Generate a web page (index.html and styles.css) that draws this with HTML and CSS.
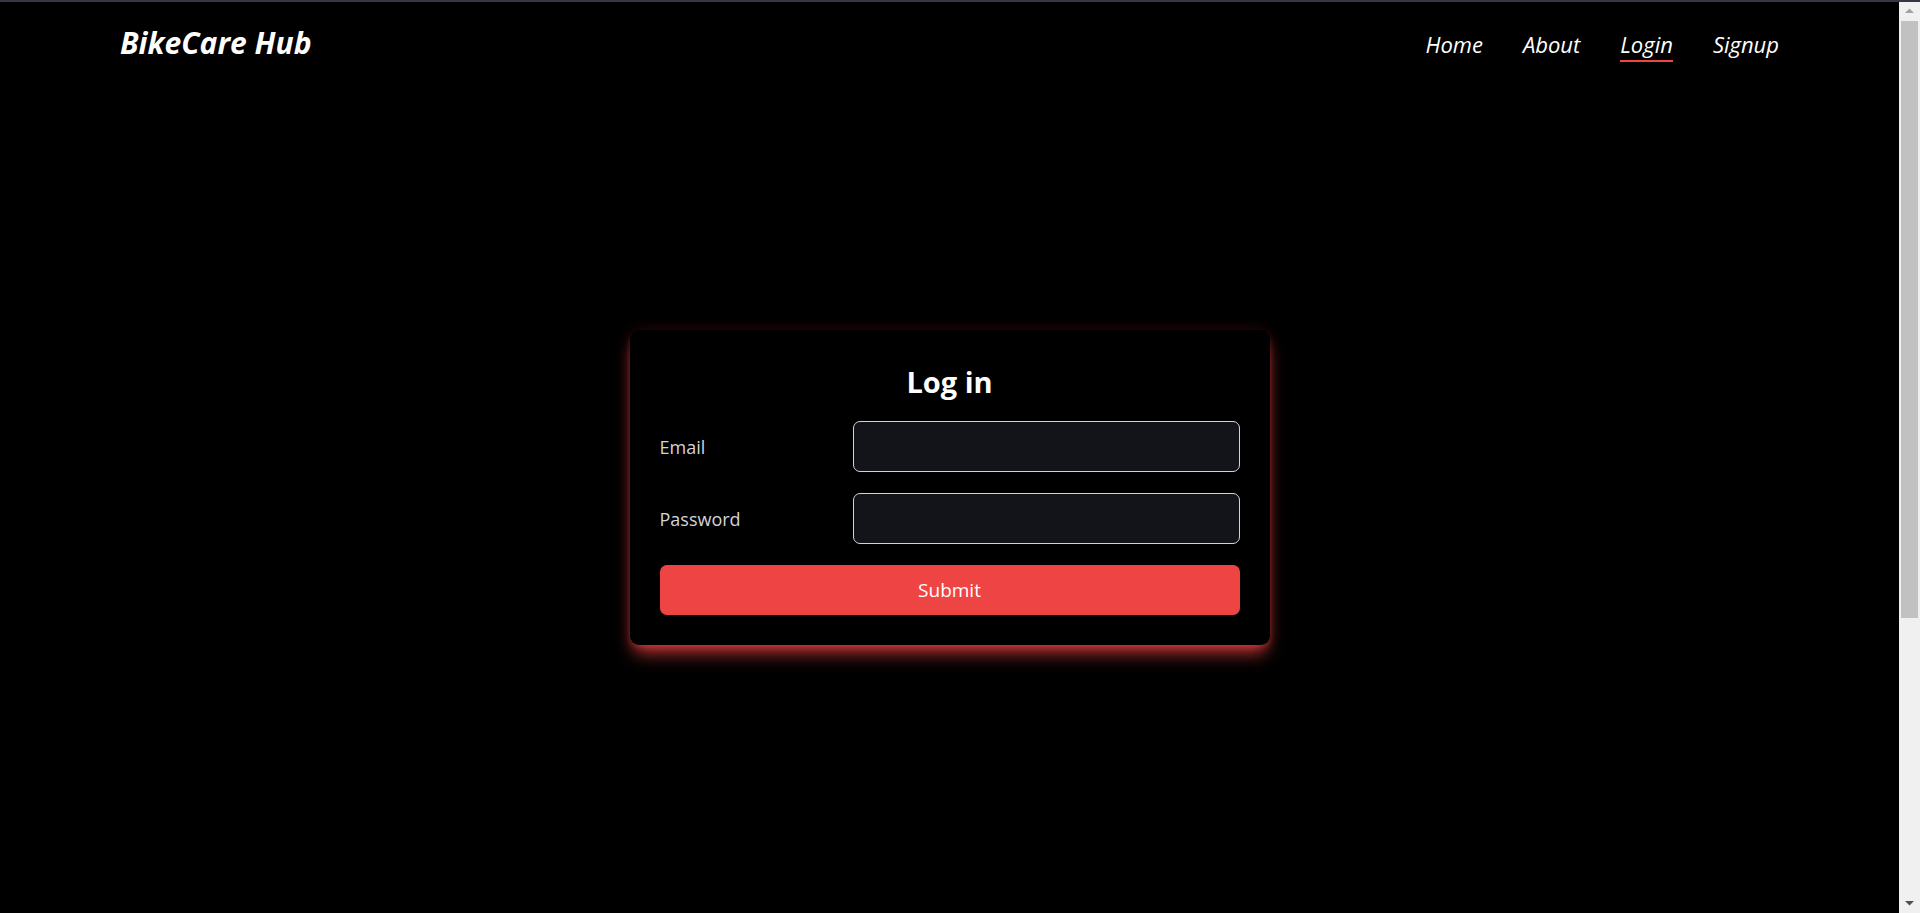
FILE: index.html
```html
<!DOCTYPE html>
<html lang="en">
<head>
<meta charset="utf-8">
<title>BikeCare Hub - Log in</title>
<link rel="stylesheet" href="styles.css">
</head>
<body>
<div class="topline"></div>
<div class="scrollbar" aria-hidden="true">
  <svg class="sb-arrow" width="21" height="19" viewBox="0 0 21 19"><path d="M6 11 L10.5 6.5 L15 11 Z" fill="#a3a3a3"/></svg>
  <div class="sb-track"><div class="sb-thumb"></div></div>
  <svg class="sb-arrow" width="21" height="19" viewBox="0 0 21 19"><path d="M6 7 L10.5 11.5 L15 7 Z" fill="#505050"/></svg>
</div>
<header class="header">
  <a class="logo" href="#">BikeCare Hub</a>
  <nav class="nav">
    <a class="nav-link" href="#">Home</a>
    <a class="nav-link" href="#">About</a>
    <a class="nav-link active" href="#">Login</a>
    <a class="nav-link" href="#">Signup</a>
  </nav>
</header>
<main class="main">
  <form class="card">
    <h1 class="card-title">Log in</h1>
    <div class="field">
      <label class="field-label" for="email">Email</label>
      <input class="field-input" id="email" type="email">
    </div>
    <div class="field">
      <label class="field-label" for="password">Password</label>
      <input class="field-input" id="password" type="password">
    </div>
    <button class="submit" type="button">Submit</button>
  </form>
</main>
</body>
</html>
```
FILE: styles.css
```css
html {
  background: #000;
}
body {
  margin: 0 21px 0 0;
  background: #000;
  color: #fff;
  font-family: "Open Sans", "Noto Sans", sans-serif;
}
.topline {
  position: fixed;
  top: 0;
  left: 0;
  right: 0;
  height: 2px;
  background: #3a3446;
  z-index: 10;
}
.scrollbar {
  position: fixed;
  top: 2px;
  right: 0;
  bottom: 0;
  width: 21px;
  background: #f0f0f0;
  display: flex;
  flex-direction: column;
  z-index: 11;
}
.sb-arrow {
  display: block;
  flex: none;
}
.sb-track {
  flex: 1;
  padding: 0 2px;
}
.sb-thumb {
  height: 597px;
  background: #c1c1c1;
}
.header {
  height: 90px;
  padding: 0 120px 0 120px;
  display: flex;
  align-items: center;
  justify-content: space-between;
  box-sizing: border-box;
}
.logo {
  color: #fff;
  text-decoration: none;
  font-size: 30px;
  font-weight: 700;
  font-style: italic;
  line-height: 38px;
  margin-top: -5px;
}
.nav {
  display: flex;
  gap: 40px;
  margin-top: 1px;
}
.nav-link {
  color: #fff;
  text-decoration: none;
  font-size: 22px;
  font-style: italic;
  line-height: 28px;
  padding-bottom: 2px;
  border-bottom: 2px solid transparent;
}
.nav-link.active {
  border-bottom-color: #ef4444;
}
.main {
  min-height: 1242px;
  display: flex;
  flex-direction: column;
  align-items: center;
  padding-top: 240px;
  box-sizing: border-box;
}
.card {
  width: 640px;
  box-sizing: border-box;
  padding: 30px;
  background: #000;
  border-radius: 9px;
  box-shadow: 0 12px 18px -4px rgba(239, 68, 68, 0.75), 0 4px 8px -4px rgba(239, 68, 68, 0.75), 0 0 14px rgba(239, 68, 68, 0.18);
  display: flex;
  flex-direction: column;
}
.card-title {
  margin: 3px 0 21px;
  text-align: center;
  font-size: 29px;
  line-height: 37px;
  font-weight: 700;
}
.field {
  display: grid;
  grid-template-columns: 1fr 2fr;
  align-items: center;
  margin-bottom: 21px;
}
.field-label {
  color: #d4d4d8;
  font-size: 18px;
}
.field-input {
  height: 51px;
  box-sizing: border-box;
  background: #121419;
  border: 1px solid #d1d5db;
  border-radius: 7px;
  color: #fff;
  font: inherit;
  padding: 0 12px;
  outline: none;
}
.submit {
  height: 50px;
  border: none;
  border-radius: 7px;
  background: #ef4444;
  color: #fff;
  font-family: inherit;
  font-size: 19px;
  cursor: pointer;
}
```
